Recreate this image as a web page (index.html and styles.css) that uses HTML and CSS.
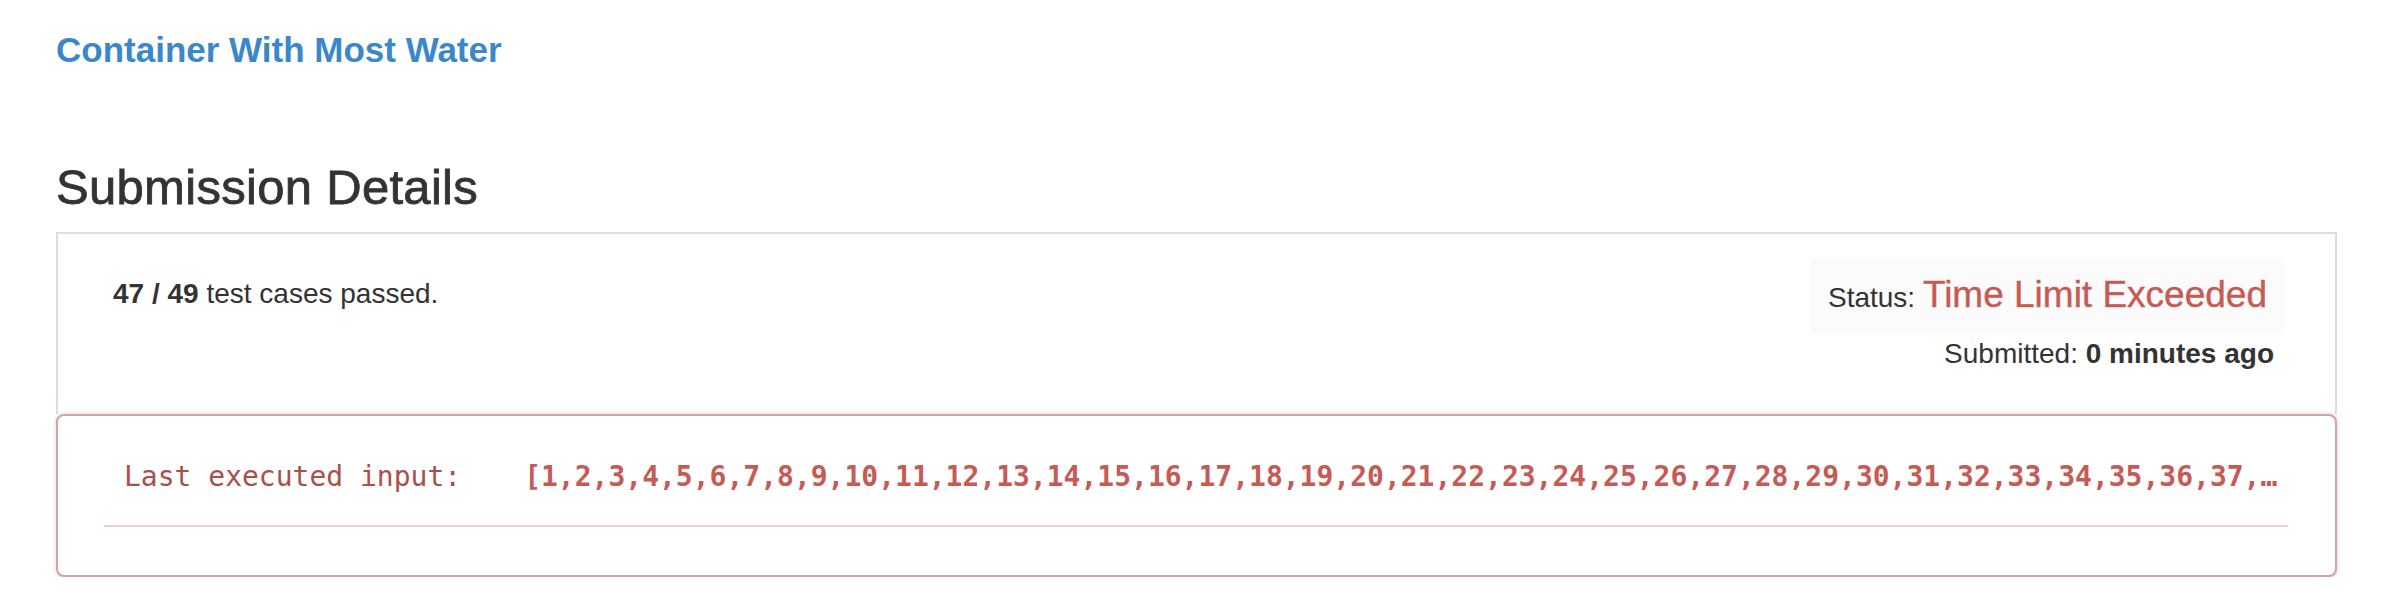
FILE: index.html
```html
<!DOCTYPE html>
<html>
<head>
<meta charset="utf-8">
<title>Submission Details</title>
<link rel="stylesheet" href="styles.css">
</head>
<body>
<div class="container">
  <h4 class="problem-title"><a href="#">Container With Most Water</a></h4>
  <h3 class="section-title">Submission Details</h3>
  <div class="result-panel">
    <div class="result-left">
      <span class="bold">47 / 49</span> test cases passed.
    </div>
    <div class="result-right">
      <div class="status-box">
        <span class="status-label">Status:</span>
        <span class="status-value">Time Limit Exceeded</span>
      </div>
      <div class="submitted">Submitted: <span class="bold">0 minutes ago</span></div>
    </div>
  </div>
  <div class="error-panel">
    <div class="error-row">
      <span class="error-label">Last executed input:</span>
      <span class="error-input">[1,2,3,4,5,6,7,8,9,10,11,12,13,14,15,16,17,18,19,20,21,22,23,24,25,26,27,28,29,30,31,32,33,34,35,36,37,…</span>
    </div>
  </div>
</div>
</body>
</html>
```
FILE: styles.css
```css
html, body {
  margin: 0;
  padding: 0;
  background: #ffffff;
}

body {
  font-family: "Liberation Sans", Arial, Helvetica, sans-serif;
  font-size: 28px;
  line-height: 40px;
  color: #333333;
}

.container {
  padding: 30px 57px 0 56px;
}

.problem-title {
  margin: 0;
  font-size: 35px;
  line-height: 40px;
  font-weight: bold;
}

.problem-title a {
  color: #3a88c9;
  text-decoration: none;
}

.section-title {
  margin: 89px 0 0 0;
  font-size: 49px;
  line-height: 56px;
  font-weight: normal;
  letter-spacing: 0.3px;
  -webkit-text-stroke: 0.8px #333333;
  color: #333333;
}

.result-panel {
  margin-top: 17px;
  height: 180px;
  border: 2px solid #dddddd;
  border-bottom: none;
  display: flex;
  justify-content: space-between;
  align-items: flex-start;
  padding: 0 50px 0 55px;
}

.bold {
  font-weight: bold;
}

.result-left {
  padding-top: 40px;
}

.result-right {
  padding-top: 24px;
  display: flex;
  flex-direction: column;
  align-items: flex-end;
}

.status-box {
  background: #fbfbfb;
  padding: 14px 18px;
  line-height: 45px;
}

.status-label {
  font-size: 28px;
}

.status-value {
  font-size: 37px;
  color: #c65a54;
  -webkit-text-stroke: 0.4px #c65a54;
}

.submitted {
  margin-right: 11px;
  line-height: 40px;
}

.error-panel {
  border: 2px solid #d4a3a3;
  border-radius: 8px;
  box-shadow: 0 0 4px rgba(190, 120, 120, 0.35);
  padding: 41px 47px 48px 46px;
  background: #ffffff;
}

.error-row {
  display: flex;
  align-items: baseline;
  gap: 63px;
  padding: 0 0 28px 20px;
  border-bottom: 2px solid #ecd0d0;
  font-family: "DejaVu Sans Mono", "Liberation Mono", monospace;
  font-size: 28px;
  line-height: 40px;
  white-space: nowrap;
}

.error-label {
  color: #a9504b;
}

.error-input {
  color: #c65a54;
  font-weight: bold;
}
```
